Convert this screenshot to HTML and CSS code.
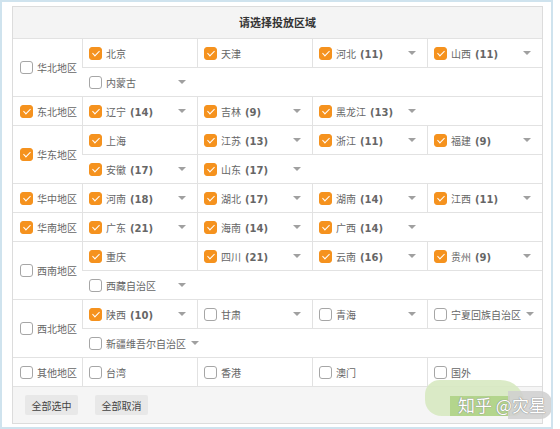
FILE: index.html
```html
<!DOCTYPE html>
<html lang="zh-CN">
<head>
<meta charset="utf-8">
<title>请选择投放区域</title>
<link rel="stylesheet" href="styles.css">
</head>
<body>
<div class="frame">
  <div class="panel">
    <div class="head">请选择投放区域</div>

    <div class="region">
      <div class="rname"><span class="cb"></span>华北地区</div>
      <div class="items multi">
        <div class="item"><span class="cb on"></span><span class="nm">北京</span></div>
        <div class="item"><span class="cb on"></span><span class="nm">天津</span></div>
        <div class="item"><span class="cb on"></span><span class="nm">河北<b>(11)</b></span><span class="dd"></span></div>
        <div class="item"><span class="cb on"></span><span class="nm">山西<b>(11)</b></span><span class="dd"></span></div>
        <div class="item"><span class="cb"></span><span class="nm">内蒙古</span><span class="dd"></span></div>
      </div>
    </div>

    <div class="region">
      <div class="rname"><span class="cb on"></span>东北地区</div>
      <div class="items">
        <div class="item"><span class="cb on"></span><span class="nm">辽宁<b>(14)</b></span><span class="dd"></span></div>
        <div class="item"><span class="cb on"></span><span class="nm">吉林<b>(9)</b></span><span class="dd"></span></div>
        <div class="item"><span class="cb on"></span><span class="nm">黑龙江<b>(13)</b></span><span class="dd"></span></div>
      </div>
    </div>

    <div class="region">
      <div class="rname"><span class="cb on"></span>华东地区</div>
      <div class="items multi">
        <div class="item"><span class="cb on"></span><span class="nm">上海</span></div>
        <div class="item"><span class="cb on"></span><span class="nm">江苏<b>(13)</b></span><span class="dd"></span></div>
        <div class="item"><span class="cb on"></span><span class="nm">浙江<b>(11)</b></span><span class="dd"></span></div>
        <div class="item"><span class="cb on"></span><span class="nm">福建<b>(9)</b></span><span class="dd"></span></div>
        <div class="item"><span class="cb on"></span><span class="nm">安徽<b>(17)</b></span><span class="dd"></span></div>
        <div class="item"><span class="cb on"></span><span class="nm">山东<b>(17)</b></span><span class="dd"></span></div>
      </div>
    </div>

    <div class="region">
      <div class="rname"><span class="cb on"></span>华中地区</div>
      <div class="items">
        <div class="item"><span class="cb on"></span><span class="nm">河南<b>(18)</b></span><span class="dd"></span></div>
        <div class="item"><span class="cb on"></span><span class="nm">湖北<b>(17)</b></span><span class="dd"></span></div>
        <div class="item"><span class="cb on"></span><span class="nm">湖南<b>(14)</b></span><span class="dd"></span></div>
        <div class="item"><span class="cb on"></span><span class="nm">江西<b>(11)</b></span><span class="dd"></span></div>
      </div>
    </div>

    <div class="region">
      <div class="rname"><span class="cb on"></span>华南地区</div>
      <div class="items">
        <div class="item"><span class="cb on"></span><span class="nm">广东<b>(21)</b></span><span class="dd"></span></div>
        <div class="item"><span class="cb on"></span><span class="nm">海南<b>(14)</b></span><span class="dd"></span></div>
        <div class="item"><span class="cb on"></span><span class="nm">广西<b>(14)</b></span><span class="dd"></span></div>
      </div>
    </div>

    <div class="region">
      <div class="rname"><span class="cb"></span>西南地区</div>
      <div class="items multi">
        <div class="item"><span class="cb on"></span><span class="nm">重庆</span></div>
        <div class="item"><span class="cb on"></span><span class="nm">四川<b>(21)</b></span><span class="dd"></span></div>
        <div class="item"><span class="cb on"></span><span class="nm">云南<b>(16)</b></span><span class="dd"></span></div>
        <div class="item"><span class="cb on"></span><span class="nm">贵州<b>(9)</b></span><span class="dd"></span></div>
        <div class="item"><span class="cb"></span><span class="nm">西藏自治区</span><span class="dd"></span></div>
      </div>
    </div>

    <div class="region">
      <div class="rname"><span class="cb"></span>西北地区</div>
      <div class="items multi">
        <div class="item"><span class="cb on"></span><span class="nm">陕西<b>(10)</b></span><span class="dd"></span></div>
        <div class="item"><span class="cb"></span><span class="nm">甘肃</span><span class="dd"></span></div>
        <div class="item"><span class="cb"></span><span class="nm">青海</span><span class="dd"></span></div>
        <div class="item"><span class="cb"></span><span class="nm">宁夏回族自治区</span><span class="dd"></span></div>
        <div class="item"><span class="cb"></span><span class="nm">新疆维吾尔自治区</span><span class="dd"></span></div>
      </div>
    </div>

    <div class="region">
      <div class="rname"><span class="cb"></span>其他地区</div>
      <div class="items">
        <div class="item"><span class="cb"></span><span class="nm">台湾</span></div>
        <div class="item"><span class="cb"></span><span class="nm">香港</span></div>
        <div class="item"><span class="cb"></span><span class="nm">澳门</span></div>
        <div class="item"><span class="cb"></span><span class="nm">国外</span></div>
      </div>
    </div>

    <div class="foot">
      <button class="btn">全部选中</button>
      <button class="btn">全部取消</button>
    </div>
  </div>

  <div class="wm">
    <div class="wm-blob"></div>
    <div class="wm-green"></div>
    <div class="wm-gray"></div>
    <div class="wm-text">知乎 @灾星</div>
  </div>
</div>
</body>
</html>
```

FILE: styles.css
```css
html, body {
  margin: 0;
  padding: 0;
  background: #ffffff;
}

body {
  font-family: "Noto Sans CJK SC", "Microsoft YaHei", "Noto Sans", sans-serif;
  font-size: 10px;
  color: #666;
}

.frame {
  position: relative;
  width: 553px;
  height: 429px;
  box-sizing: border-box;
  border: 2px solid #cfe3ee;
  padding: 4px 0 0 10px;
  background: #fff;
  overflow: hidden;
}

.panel {
  width: 531px;
  box-sizing: border-box;
  border: 1px solid #dcdcdc;
  background: #fff;
}

.head {
  height: 31px;
  line-height: 31px;
  background: #f4f4f4;
  border-bottom: 1px solid #e2e2e2;
  text-align: center;
  font-size: 11px;
  font-weight: bold;
  color: #333;
}

.region {
  display: flex;
  border-bottom: 1px solid #e2e2e2;
}

.rname {
  width: 69px;
  box-sizing: border-box;
  padding-left: 7px;
  display: flex;
  align-items: center;
  color: #666;
}

.items {
  width: 460px;
  display: flex;
  flex-wrap: wrap;
}

.item {
  flex: 0 0 115px;
  min-width: 0;
  height: 28px;
  box-sizing: border-box;
  border-left: 1px solid #e2e2e2;
  padding: 0 11px 0 6px;
  display: flex;
  align-items: center;
  white-space: nowrap;
}

.items.multi .item:nth-child(-n+4) {
  border-bottom: 1px solid #e2e2e2;
  height: 29px;
}

.items.multi .item:nth-child(n+5) {
  border-left-color: transparent;
}

.items.multi .item:nth-child(n+6) {
  border-left-color: #e2e2e2;
}

.nm {
  color: #666;
  margin-right: 5px;
}

.nm b {
  font-family: "DejaVu Sans", Verdana, sans-serif;
  font-weight: bold;
  font-size: 10px;
  color: #666;
  margin-left: 4px;
}

.cb {
  flex: 0 0 auto;
  position: relative;
  width: 13px;
  height: 13px;
  box-sizing: border-box;
  border: 1px solid #a6a6a6;
  border-radius: 3px;
  background: #fff;
  margin-right: 4px;
}

.cb.on {
  background: #f5921e;
  border-color: #f5921e;
}

.cb.on::after {
  content: "";
  position: absolute;
  left: 3.5px;
  top: 1px;
  width: 3px;
  height: 6px;
  border-right: 1.5px solid #fff;
  border-bottom: 1.5px solid #fff;
  transform: rotate(45deg);
}

.dd {
  flex: 0 0 auto;
  margin-left: auto;
  width: 0;
  height: 0;
  border-left: 4px solid transparent;
  border-right: 4px solid transparent;
  border-top: 4px solid #a0a0a0;
}

.foot {
  height: 36px;
  background: #f5f5f5;
  display: flex;
  align-items: center;
  gap: 17px;
  padding-left: 12px;
}

.btn {
  width: 53px;
  height: 20px;
  padding: 0;
  border: none;
  border-radius: 2px;
  background: #e8e8e8;
  font-family: "Noto Sans CJK SC", "Microsoft YaHei", sans-serif;
  font-size: 10px;
  color: #444;
}

/* watermark overlay */
.wm {
  position: absolute;
  left: 420px;
  top: 376px;
  width: 135px;
  height: 48px;
}

.wm-blob {
  position: absolute;
  left: 3px;
  top: 2px;
  width: 100px;
  height: 36px;
  border-radius: 18px 30px 14px 20px;
  background: #d7e9c1;
  opacity: 0.9;
}

.wm-green {
  position: absolute;
  left: 28px;
  top: 18px;
  width: 60px;
  height: 20px;
  background: #b3d58c;
}

.wm-gray {
  position: absolute;
  left: 86px;
  top: 13px;
  width: 44px;
  height: 28px;
  border-radius: 0 12px 12px 0;
  background: #cfcfcf;
  opacity: 0.85;
}

.wm-text {
  position: absolute;
  left: 36px;
  top: 14px;
  font-family: "Noto Sans CJK SC", sans-serif;
  font-size: 17px;
  color: #ffffff;
  white-space: nowrap;
  text-shadow: 0 0 1px #888, 0 0 1px #888;
}
```
